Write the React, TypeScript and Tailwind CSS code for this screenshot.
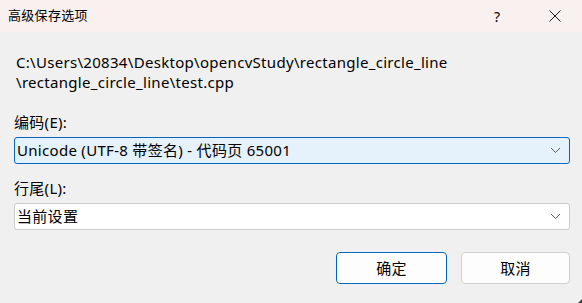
const font = { fontFamily: '"Noto Sans", "Noto Sans CJK SC", sans-serif' }

function Combo({ value, active }: { value: string; active?: boolean }) {
  return (
    <div
      className={`ml-[14px] mr-[12px] h-[27px] flex items-center justify-between pl-[2px] pr-[8px] rounded-[3px] border ${
        active ? 'border-[#0067c0] bg-[#e5f1fb]' : 'border-[#cccccc] bg-white'
      }`}
    >
      <span className="text-[15px] leading-none tracking-[0.3px] text-black">{value}</span>
      <svg width="11" height="7" viewBox="0 0 11 7" className="text-[#5a5a5a]">
        <polyline points="1,1 5.5,5.5 10,1" fill="none" stroke="currentColor" strokeWidth="1" />
      </svg>
    </div>
  )
}

export default function App() {
  return (
    <div className="w-[582px] h-[303px] bg-[#f0f0f0] relative overflow-hidden" style={font}>
      <div className="h-[32px] bg-[#f9f1ef] flex items-center">
        <span className="pl-[8px] text-[13px] tracking-[0.3px] text-black">高级保存选项</span>
        <span className="ml-auto text-[14px] text-black mr-[49px]">?</span>
        <svg width="12" height="12" viewBox="0 0 12 12" className="mr-[21px]">
          <path d="M0.5 0.5 L11.5 11.5 M11.5 0.5 L0.5 11.5" stroke="#1a1a1a" strokeWidth="1" />
        </svg>
      </div>

      <div className="pt-[20px] pl-[16px] text-[15px] leading-[20px] tracking-[0.3px] text-black">
        <div>C:\Users\20834\Desktop\opencvStudy\rectangle_circle_line</div>
        <div>\rectangle_circle_line\test.cpp</div>
      </div>

      <div className="mt-[20px] pl-[14px] text-[15px] leading-[20px] tracking-[0.3px] text-black">编码(E):</div>
      <div className="mt-[5px]">
        <Combo value="Unicode (UTF-8 带签名) - 代码页 65001" active />
      </div>

      <div className="mt-[14px] pl-[14px] text-[15px] leading-[20px] tracking-[0.3px] text-black">行尾(L):</div>
      <div className="mt-[5px]">
        <Combo value="当前设置" />
      </div>

      <div className="mt-[22px] flex justify-end gap-[14px] pr-[12px]">
        <button className="w-[111px] h-[32px] rounded-[4px] border border-[#0067c0] bg-[#fdfdfd] text-[15px] tracking-[0.3px] text-black">
          确定
        </button>
        <button className="w-[109px] h-[32px] rounded-[4px] border border-[#d0d0d0] bg-[#fdfdfd] text-[15px] tracking-[0.3px] text-black">
          取消
        </button>
      </div>

      <svg width="4" height="4" viewBox="0 0 4 4" className="absolute right-0 bottom-0">
        <path d="M4 0 L4 4 L0 4 Z" fill="#444" />
      </svg>
    </div>
  )
}
